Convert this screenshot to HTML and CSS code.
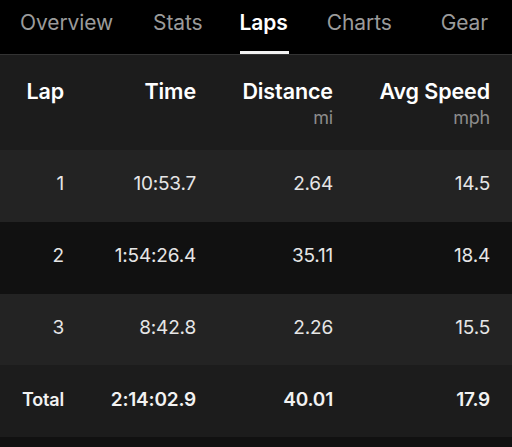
FILE: index.html
```html
<!DOCTYPE html>
<html>
<head>
<meta charset="utf-8">
<link rel="stylesheet" href="styles.css">
</head>
<body>
<nav class="tabs">
  <span class="tab t-overview">Overview</span>
  <span class="tab t-stats">Stats</span>
  <span class="tab t-laps active">Laps</span>
  <span class="tab t-charts">Charts</span>
  <span class="tab t-gear">Gear</span>
</nav>
<section class="table">
  <div class="row head">
    <div class="cell"><span class="h">Lap</span></div>
    <div class="cell"><span class="h">Time</span></div>
    <div class="cell"><span class="h">Distance</span><span class="unit">mi</span></div>
    <div class="cell"><span class="h">Avg Speed</span><span class="unit">mph</span></div>
  </div>
  <div class="row light">
    <div class="cell">1</div>
    <div class="cell">10:53.7</div>
    <div class="cell">2.64</div>
    <div class="cell">14.5</div>
  </div>
  <div class="row dark">
    <div class="cell">2</div>
    <div class="cell">1:54:26.4</div>
    <div class="cell">35.11</div>
    <div class="cell">18.4</div>
  </div>
  <div class="row light">
    <div class="cell">3</div>
    <div class="cell">8:42.8</div>
    <div class="cell">2.26</div>
    <div class="cell">15.5</div>
  </div>
  <div class="row total">
    <div class="cell">Total</div>
    <div class="cell">2:14:02.9</div>
    <div class="cell">40.01</div>
    <div class="cell">17.9</div>
  </div>
</section>
<div class="footer"></div>
</body>
</html>
```
FILE: styles.css
```css
* { box-sizing: border-box; }
html, body {
  margin: 0;
  padding: 0;
  background: #111111;
  font-family: Inter, "Noto Sans", sans-serif;
  color: #e6e6e6;
}
.tabs {
  height: 55px;
  background: #000;
  border-bottom: 1px solid #333;
  display: flex;
  align-items: flex-start;
  padding-left: 20px;
  gap: 39px;
}
.tab {
  position: relative;
  font-size: 21px;
  line-height: 26px;
  padding-top: 10px;
  color: #9b9b9b;
  letter-spacing: -0.1px;
}
.t-stats { margin-left: 1px; }
.t-laps { margin-left: -2px; }
.t-gear { margin-left: 10px; }
.tab.active {
  color: #fff;
  font-weight: 600;
}
.tab.active::after {
  content: "";
  position: absolute;
  left: 0;
  right: -1px;
  top: 51px;
  height: 3px;
  background: #f2f2f2;
}
.table {
  display: flex;
  flex-direction: column;
}
.row {
  display: grid;
  grid-template-columns: 64px 132px 137px 157px;
  height: 71.75px;
  align-items: center;
  padding-bottom: 4px;
  font-size: 19px;
  letter-spacing: -0.2px;
}
.cell {
  text-align: right;
  display: flex;
  flex-direction: column;
  align-items: flex-end;
}
.row.head {
  height: 95px;
  background: #1c1c1c;
  align-items: start;
  padding: 23px 0 0 0;
}
.h {
  font-size: 21.5px;
  line-height: 26px;
  font-weight: 600;
  color: #fff;
  letter-spacing: -0.1px;
}
.unit {
  font-size: 18px;
  line-height: 24px;
  color: #8c8c8c;
  margin-top: 2px;
}
.row.light { background: #232323; }
.row.dark { background: #111111; }
.row.total {
  background: #1c1c1c;
  font-weight: 600;
  color: #f2f2f2;
}
.row.total .cell:first-child { font-size: 18px; }
.footer {
  height: 10px;
  background: #111111;
}
```
